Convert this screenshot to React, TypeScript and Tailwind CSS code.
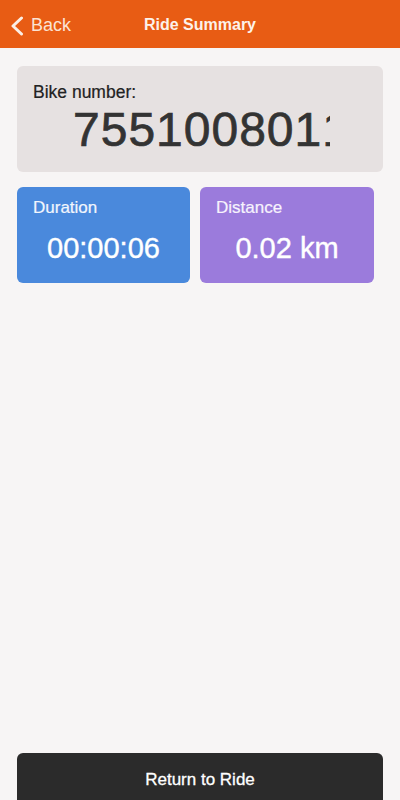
import React from "react";

export default function App() {
  const font = { fontFamily: '"Liberation Sans", Arial, sans-serif' };
  return (
    <div className="h-[800px] w-[400px] overflow-hidden bg-[#f7f5f5] flex flex-col" style={font}>
      <header className="relative h-12 bg-[#e85c14] flex items-center shrink-0">
        <div className="flex items-center pl-[10px] pt-[3px] text-[#fbe9dc]">
          <svg width="14" height="20" viewBox="0 0 14 20" fill="none" className="mr-[7px]">
            <path d="M11.5 2 L3 10 L11.5 18" stroke="#fbefe6" strokeWidth="3" strokeLinecap="round" strokeLinejoin="round" />
          </svg>
          <span className="text-[18px] text-[#fbe3d3]">Back</span>
        </div>
        <div className="absolute inset-0 flex items-center justify-center pt-[2px]">
          <span className="text-[16px] font-bold text-[#fdf2ea]">Ride Summary</span>
        </div>
      </header>

      <main className="flex-1 flex flex-col px-[17px] pt-[18px]">
        <section className="h-[106px] rounded-md bg-[#e6e1e1] pl-[16px] pt-[13px]">
          <div className="text-[17.5px] text-[#222] [-webkit-text-stroke:0.2px_#222]">Bike number:</div>
          <div className="flex mt-[-3px]">
            <div className="ml-[40px] whitespace-nowrap text-[48px] leading-[56px] tracking-[1px] text-[#333] [-webkit-text-stroke:0.7px_#333]">
              <span>755100801</span>
              <span className="inline-block align-top w-[8px] overflow-hidden">1</span>
            </div>
          </div>
        </section>

        <div className="flex gap-[10px] mt-[15px] pr-[9px]">
          <div className="w-[173px] h-[96px] rounded-md bg-[#4a89dc] text-white pl-[16px] pt-[8px]">
            <div className="text-[17px] text-[#f2f6fd] [-webkit-text-stroke:0.2px_#f2f6fd]">Duration</div>
            <div className="text-center pr-[16px] mt-[6px] text-[29px] [-webkit-text-stroke:0.4px_white]">00:00:06</div>
          </div>
          <div className="w-[174px] h-[96px] rounded-md bg-[#9b7bdc] text-white pl-[16px] pt-[8px]">
            <div className="text-[17px] text-[#f7f3fd] [-webkit-text-stroke:0.2px_#f7f3fd]">Distance</div>
            <div className="text-center pr-[16px] mt-[6px] text-[29px] [-webkit-text-stroke:0.4px_white]">0.02 km</div>
          </div>
        </div>

        <div className="flex-1" />

        <button className="h-[54px] mb-[-7px] rounded-md bg-[#2b2b2b] text-white text-[17px] [-webkit-text-stroke:0.3px_white] flex items-center justify-center">
          Return to Ride
        </button>
      </main>
    </div>
  );
}
